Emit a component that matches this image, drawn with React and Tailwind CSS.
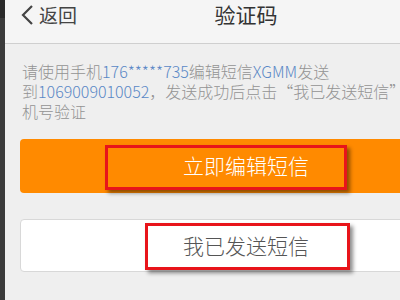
import React from "react";

function App() {
  return (
    <div
      className="w-[400px] h-[300px] overflow-hidden flex bg-[#efefef]"
      style={{ fontFamily: '"Noto Sans CJK SC", "Noto Sans", sans-serif' }}
    >
      {/* left edge of the window behind */}
      <div className="w-[5px] shrink-0 flex flex-col bg-[#3b3b3b]">
        <div className="h-[18px] bg-[#2a2a2a]" />
      </div>

      <div className="w-[482px] shrink-0 flex flex-col">
        {/* header */}
        <div className="h-[44px] shrink-0 relative bg-[#f5f5f5] border-b border-[#cfcfcf]">
          <div className="absolute left-[14px] top-[3px] flex items-center text-[#444] text-[19px]">
            <svg width="16" height="22" viewBox="0 0 16 22">
              <path d="M13 2 L4 11 L13 20" fill="none" stroke="#444" strokeWidth="2.2" />
            </svg>
            <span className="ml-[4px] leading-[24px]">返回</span>
          </div>
          <div className="flex justify-center pt-[1px]">
            <h1 className="text-[21px] leading-[26px] text-[#333]">验证码</h1>
          </div>
        </div>

        {/* body */}
        <div className="pt-[17px] pl-[17px] text-[16px] leading-[20px] font-light text-[#939393] whitespace-nowrap">
          <p>
            请使用手机<span className="text-[#5a88c6]">176*****735</span>编辑短信
            <span className="text-[#5a88c6]">XGMM</span>发送
          </p>
          <p>
            到<span className="text-[#5a88c6]">1069009010052</span>，发送成功后点击“我已发送短信”验证手
          </p>
          <p>机号验证</p>
        </div>

        <div className="px-[15px] mt-[18px]">
          <button className="relative w-full h-[54px] rounded-[4px] bg-[#ff8a00] text-white text-[21px] font-light">
            立即编辑短信
            <span className="absolute left-[85px] top-[6px] w-[242px] h-[45px] border-[3px] border-[#e8141a] shadow-[3px_3px_4px_rgba(0,0,0,0.45)]" />
          </button>

          <button className="relative w-full h-[53px] mt-[26px] rounded-[4px] bg-white border border-[#d8d8d8] text-[#555] text-[21px] font-light">
            我已发送短信
            <span className="absolute left-[124px] top-[3px] w-[205px] h-[47px] border-[3px] border-[#e8141a] shadow-[3px_3px_4px_rgba(0,0,0,0.45)]" />
          </button>
        </div>
      </div>
    </div>
  );
}

export default App;
